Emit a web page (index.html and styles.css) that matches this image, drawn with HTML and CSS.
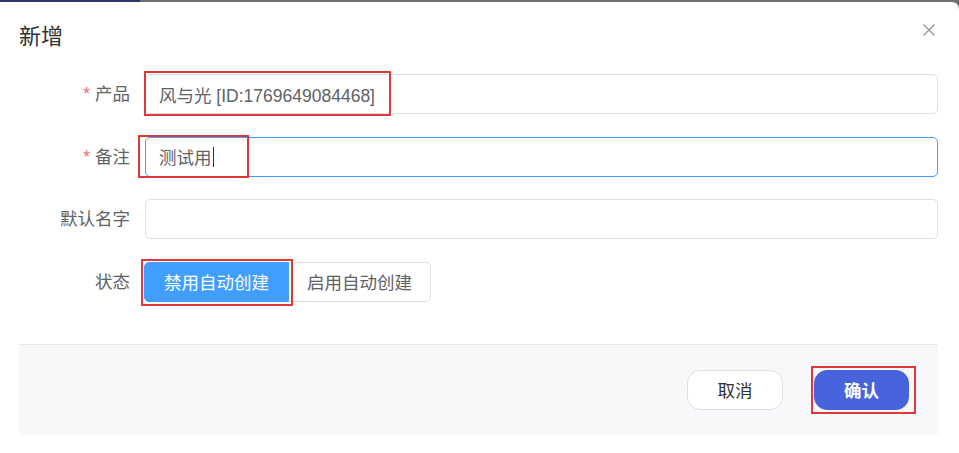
FILE: index.html
```html
<!DOCTYPE html>
<html lang="zh-CN">
<head>
<meta charset="utf-8">
<title>新增</title>
<link rel="stylesheet" href="styles.css">
</head>
<body>
<div class="overlay-strip"><span class="strip-dark"></span></div>
<div class="dialog">
  <div class="dialog-header">
    <span class="dialog-title">新增</span>
    <svg class="close" viewBox="0 0 12 12" width="12" height="12"><path d="M0.5 0.5 L11.5 11.5 M11.5 0.5 L0.5 11.5" stroke="#909399" stroke-width="1.2" fill="none"/></svg>
  </div>
  <div class="dialog-body">
    <div class="form-row">
      <label class="form-label"><span class="req">*</span>产品</label>
      <div class="form-control">
        <div class="input"><span class="input-text">风与光 [ID:1769649084468]</span></div>
        <span class="mark mark-product"></span>
      </div>
    </div>
    <div class="form-row">
      <label class="form-label"><span class="req">*</span>备注</label>
      <div class="form-control">
        <div class="input input-focus"><span class="input-text">测试用</span><span class="caret"></span></div>
        <span class="mark mark-note"></span>
      </div>
    </div>
    <div class="form-row">
      <label class="form-label">默认名字</label>
      <div class="form-control">
        <div class="input"></div>
      </div>
    </div>
    <div class="form-row">
      <label class="form-label">状态</label>
      <div class="form-control">
        <div class="radio-group">
          <span class="radio-btn radio-active">禁用自动创建</span>
          <span class="radio-btn">启用自动创建</span>
          <span class="mark mark-status"></span>
        </div>
      </div>
    </div>
  </div>
  <div class="dialog-footer">
    <button class="btn btn-cancel">取消</button>
    <span class="btn-wrap">
      <button class="btn btn-confirm">确认</button>
      <span class="mark mark-confirm"></span>
    </span>
  </div>
</div>
</body>
</html>
```
FILE: styles.css
```css
* { box-sizing: border-box; }
html, body {
  margin: 0;
  padding: 0;
  width: 959px;
  height: 453px;
  overflow: hidden;
}
body {
  background: #6f6f71;
  font-family: "Liberation Sans", "Noto Sans CJK SC", sans-serif;
  font-size: 17.5px;
  color: #606266;
}
.overlay-strip {
  height: 2px;
  display: flex;
}
.strip-dark {
  width: 140px;
  height: 2px;
  background: #2b3566;
}
.dialog {
  background: #fff;
  height: 451px;
  border-radius: 0 7px 0 0;
  padding: 0 21px 0 19px;
}
.dialog-header {
  height: 70px;
  display: flex;
  align-items: flex-start;
  justify-content: space-between;
  padding-right: 3px;
}
.dialog-title {
  font-size: 22px;
  color: #303133;
  line-height: 24px;
  margin-top: 23px;
}
.close {
  display: block;
  margin-top: 22px;
}
.dialog-body {
  padding-top: 2px;
}
.form-row {
  display: flex;
  align-items: center;
  height: 40px;
  margin-bottom: 22.5px;
}
.form-row:last-child { margin-bottom: 0; }
.form-label {
  width: 126px;
  flex: none;
  text-align: right;
  padding-right: 15px;
  color: #606266;
  line-height: 40px;
}
.req {
  color: #f56c6c;
  margin-right: 5px;
}
.form-control {
  position: relative;
  flex: 1;
  height: 40px;
}
.input {
  height: 40px;
  border: 1px solid #dcdfe6;
  border-radius: 5px;
  display: flex;
  align-items: center;
  padding: 0 13px;
  color: #606266;
}
.input-focus {
  border-color: #409eff;
}
.caret {
  width: 1px;
  height: 20px;
  background: #303133;
  margin-left: 1px;
}
.mark {
  position: absolute;
  border: 2px solid #e0373b;
  pointer-events: none;
}
.mark-product { left: -1px; top: -3px; width: 247px; height: 45px; }
.mark-note { left: -7px; top: -2px; width: 111px; height: 43px; }
.mark-status { left: -3px; top: -3px; width: 152px; height: 47px; }
.mark-confirm { left: -3px; top: -4px; width: 105px; height: 48px; }
.radio-group {
  position: relative;
  display: inline-flex;
  height: 40px;
  margin-left: -1px;
}
.radio-btn {
  display: flex;
  align-items: center;
  justify-content: center;
  height: 40px;
  padding: 0;
  white-space: nowrap;
  border: 1px solid #dcdfe6;
  color: #606266;
  background: #fff;
}
.radio-btn:first-child {
  border-radius: 5px 0 0 5px;
  width: 145px;
}
.radio-btn:nth-child(2) {
  border-left: 0;
  border-radius: 0 5px 5px 0;
  width: 142px;
}
.radio-active {
  background: #409eff;
  border-color: #409eff;
  color: #fff;
}
.dialog-footer {
  margin-top: 42px;
  height: 91px;
  background: #f8f8fa;
  border-top: 1px solid #e8e8ea;
  display: flex;
  justify-content: flex-end;
  align-items: flex-start;
  padding: 25px 29px 0 0;
  gap: 31px;
}
.btn-wrap {
  position: relative;
  display: inline-block;
}
.btn {
  font-family: "Liberation Sans", "Noto Sans CJK SC", sans-serif;
  font-size: 17.5px;
  height: 40px;
  width: 96px;
  border-radius: 13px;
  cursor: pointer;
  padding: 0;
}
.btn-cancel {
  background: #fff;
  border: 1px solid #dcdfe6;
  color: #303133;
}
.btn-confirm {
  display: block;
  width: 95px;
  background: #4763dc;
  border: 1px solid #4763dc;
  color: #fff;
  font-weight: bold;
}
```
